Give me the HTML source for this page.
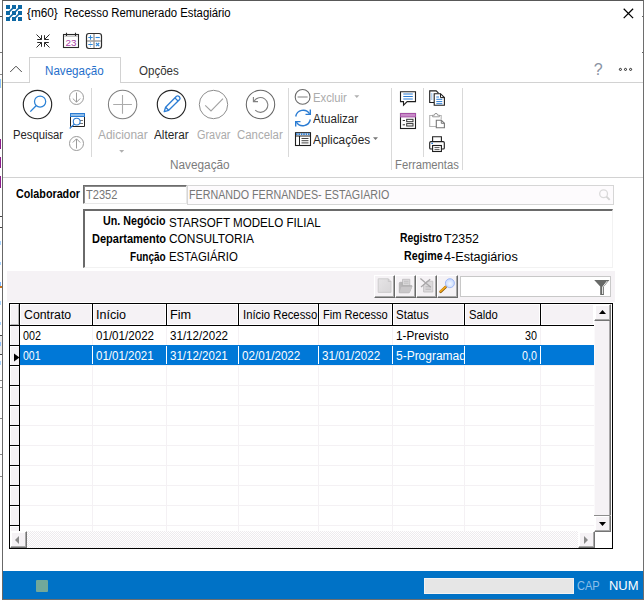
<!DOCTYPE html>
<html lang="pt-BR">
<head>
<meta charset="utf-8">
<title>{m60} Recesso Remunerado Estagiário</title>
<style>
*{box-sizing:border-box;margin:0;padding:0}
html,body{width:644px;height:600px;overflow:hidden;background:#fff}
body{font-family:"Liberation Sans",sans-serif;font-size:12px;color:#262626;position:relative}
.a{position:absolute}
.t{position:absolute;white-space:pre;line-height:14px;height:14px;transform-origin:0 0}
.sep{position:absolute;width:1px;background:#d9d9d9}
svg{position:absolute;overflow:visible}
.sbtn{position:absolute;width:17px;height:17px;background:#f5f2f5;border:1px solid;border-color:#fff #747474 #747474 #fff;box-shadow:inset -1px -1px 0 #a9a9a9,inset 1px 1px 0 #fff}
.tb{position:absolute;top:275px;width:21px;height:23px;background:#f5f2f5;border:1px solid;border-color:#fff #6a6a6a #6a6a6a #fff;box-shadow:inset -1px -1px 0 #a8a8a8}
</style>
</head>
<body>
<!-- window frame -->
<div class="a" style="left:2px;top:0;width:642px;height:600px;border:1px solid #6e6e6e;border-top-color:#585858;border-left-color:#686868"></div>
<!-- slivers of the window behind, visible left of the frame -->
<div class="a" style="left:0;top:16px;width:2px;height:1px;background:#555"></div>
<div class="a" style="left:0;top:52px;width:2px;height:1px;background:#777"></div>
<div class="a" style="left:0;top:74px;width:2px;height:1px;background:#888"></div>
<div class="a" style="left:0;top:79px;width:1px;height:9px;background:#8cc0ff"></div>
<div class="a" style="left:1px;top:79px;width:1px;height:9px;background:#ffffd8"></div>
<div class="a" style="left:0;top:139px;width:1px;height:10px;background:#8b1a8b"></div>
<div class="a" style="left:0;top:157px;width:1px;height:11px;background:#8b1a8b"></div>
<div class="a" style="left:0;top:176px;width:1px;height:12px;background:#8b1a8b"></div>
<div class="a" style="left:0;top:216px;width:2px;height:1px;background:#444"></div>
<div class="a" style="left:0;top:227px;width:2px;height:1px;background:#444"></div>
<div class="a" style="left:0;top:241px;width:1px;height:4px;background:#a6d4ff"></div>
<div class="a" style="left:0;top:262px;width:1px;height:3px;background:#a6d4ff"></div>
<div class="a" style="left:0;top:282px;width:1px;height:4px;background:#7db8ff"></div>
<div class="a" style="left:0;top:286px;width:2px;height:2px;background:#c9761f"></div>
<div class="a" style="left:0;top:301px;width:1px;height:4px;background:#a6d4ff"></div>
<div class="a" style="left:0;top:322px;width:1px;height:3px;background:#a6d4ff"></div>
<div class="a" style="left:0;top:335px;width:2px;height:20px;background:#ececec;border-top:1px solid #444;border-bottom:1px solid #444"></div>
<div class="a" style="left:0;top:342px;width:1px;height:4px;background:#8cc0ff"></div>
<div class="a" style="left:0;top:361px;width:1px;height:4px;background:#a6d4ff"></div>
<div class="a" style="left:0;top:380px;width:2px;height:1px;background:#888"></div>
<div class="a" style="left:0;top:387px;width:2px;height:1px;background:#888"></div>
<div class="a" style="left:0;top:418px;width:2px;height:1px;background:#888"></div>
<div class="a" style="left:0;top:454px;width:2px;height:1px;background:#888"></div>
<div class="a" style="left:0;top:476px;width:2px;height:1px;background:#888"></div>

<div class="a" style="left:642px;top:16px;width:1px;height:1px;background:#666"></div>
<div class="a" style="left:642px;top:52px;width:1px;height:1px;background:#666"></div>
<!-- title bar close -->
<svg style="left:622.5px;top:7.5px" width="11" height="11" viewBox="0 0 11 11"><path d="M0.7 0.7L10.1 10.1M10.1 0.7L0.7 10.1" stroke="#000" stroke-width="1.25" fill="none"/></svg>
<svg style="left:0;top:0" width="644" height="60" viewBox="0 0 644 60" fill="none">
<!-- app icon -->
<g fill="#0d68a4">
<rect x="6" y="5" width="4" height="4"/><rect x="12" y="5" width="4" height="4"/><rect x="18" y="5" width="4" height="4"/>
<rect x="6" y="11" width="4" height="4"/><rect x="12" y="11" width="4" height="4"/><rect x="18" y="11" width="4" height="4"/>
<rect x="6" y="17" width="4" height="4"/><rect x="12" y="17" width="4" height="4"/><rect x="18" y="17" width="4" height="4"/>
</g>
<g stroke="#0d68a4" stroke-width="1.7">
<path d="M13 8L9 12M19 8L15 12M13 14L9 18M19 14L15 18"/>
</g>
<!-- collapse arrows -->
<g stroke="#2a2a2a" stroke-width="1">
<path d="M36.5 34.5L41.5 39.5M41.5 35.2V39.5H37.2"/>
<path d="M49.5 34.5L44.5 39.5M44.5 35.2V39.5H48.8"/>
<path d="M36.5 47.5L41.5 42.5M41.5 46.8V42.5H37.2"/>
<path d="M49.5 47.5L44.5 42.5M44.5 46.8V42.5H48.8"/>
</g>
<!-- calendar -->
<rect x="63.5" y="34.5" width="15" height="13" fill="#fff" stroke="#2a2a2a" stroke-width="1.1"/>
<path d="M64.2 36.2H77.8" stroke="#c6c6c6" stroke-width="1.6"/>
<path d="M66.5 32.8V36M75.5 32.8V36" stroke="#2a2a2a" stroke-width="1.1"/>
<text x="65.6" y="45.6" textLength="11" lengthAdjust="spacingAndGlyphs" font-family="Liberation Sans, sans-serif" font-size="9.6" fill="#a83fa8" stroke="none">23</text>
<!-- calculator -->
<rect x="86.5" y="33.5" width="15" height="15" rx="2.4" fill="#fff" stroke="#2f2f2f" stroke-width="1.2"/>
<path d="M94 34V48M87 41H101" stroke="#a0a0a0" stroke-width="1.5"/>
<g stroke="#2b86d9" stroke-width="1.1">
<path d="M88.3 37.5H92.7M90.5 35.3V39.7"/>
<path d="M95.6 37.5H99.8"/>
<path d="M88.3 44.5H92.7M90.5 42.4V43.2M90.5 45.8V46.6"/>
<path d="M96 43L99.2 46.2M99.2 43L96 46.2"/>
</g>
</svg>

<!-- TABS -->
<div class="a" style="left:3px;top:82px;width:640px;height:1px;background:#d2d2d2"></div>
<div class="a" style="left:29px;top:57px;width:92px;height:26px;background:#fff;border:1px solid #d2d2d2;border-bottom:0"></div>
<svg style="left:10px;top:65px" width="13" height="8" viewBox="0 0 13 8"><path d="M0.2 7L6 1.2L11.8 7" stroke="#4a4a4a" stroke-width="1" fill="none"/></svg>
<span class="t" style="left:593.8px;top:61px;font-size:16px;line-height:18px;height:18px;color:#8a93a3">?</span>
<svg style="left:0;top:0" width="644" height="100" viewBox="0 0 644 100"><g fill="none" stroke="#1c1c1c" stroke-width="0.95"><circle cx="620.4" cy="69.4" r="1.05"/><circle cx="625.5" cy="69.4" r="1.05"/><circle cx="630.6" cy="69.4" r="1.05"/></g></svg>

<!-- RIBBON -->
<div class="a" style="left:3px;top:177px;width:640px;height:1px;background:#d2d2d2"></div>
<div class="sep" style="left:91px;top:88px;height:69px"></div>
<div class="sep" style="left:288px;top:88px;height:69px"></div>
<div class="sep" style="left:391px;top:88px;height:82px"></div>
<div class="sep" style="left:423px;top:88px;height:69px"></div>
<div class="sep" style="left:462px;top:88px;height:82px"></div>
<svg style="left:0;top:0" width="644" height="600" viewBox="0 0 644 600" fill="none" stroke-linecap="butt">
<!-- Pesquisar -->
<circle cx="37.5" cy="104.5" r="14.2" stroke="#262626" stroke-width="1.15"/>
<circle cx="40.1" cy="101.6" r="5.6" stroke="#2b82d6" stroke-width="1.25"/>
<path d="M36.1 105.7L30.3 111.6" stroke="#2b82d6" stroke-width="1.35"/>
<!-- down arrow circle -->
<circle cx="76.5" cy="97.5" r="7" stroke="#9a9a9a" stroke-width="1"/>
<path d="M76.5 92.5V102M72.8 98.5L76.5 102.2L80.2 98.5" stroke="#9a9a9a" stroke-width="1"/>
<!-- search window -->
<path d="M70.5 116.5V126.5H84.5V116.5" stroke="#222" stroke-width="1"/>
<rect x="70.5" y="113.5" width="14" height="3" fill="#8fbde9" stroke="#2b7cd3" stroke-width="1"/>
<path d="M79 120.5H83M79 123.5H83" stroke="#777" stroke-width="1"/>
<circle cx="76.7" cy="121.6" r="3.4" fill="#fff" stroke="#2b7cd3" stroke-width="1.1"/>
<path d="M74.3 124.1L69.7 128.5" stroke="#2b7cd3" stroke-width="1.2"/>
<!-- up arrow circle -->
<circle cx="76.5" cy="143.5" r="7" stroke="#9a9a9a" stroke-width="1"/>
<path d="M76.5 148.5V139M72.8 142.5L76.5 138.8L80.2 142.5" stroke="#9a9a9a" stroke-width="1"/>
<!-- Adicionar -->
<circle cx="122.6" cy="104.5" r="14.2" stroke="#7e7e7e" stroke-width="1.05"/>
<path d="M113.2 104.5H131.9M122.5 95V113.7" stroke="#ababab" stroke-width="1.1"/>
<path d="M119.2 150L121.7 152.8L124.2 150Z" fill="#b0b0b0" stroke="none"/>
<!-- Alterar -->
<circle cx="171.5" cy="104.5" r="14.2" stroke="#262626" stroke-width="1.15"/>
<g stroke="#2b7cd3" stroke-width="1.3" stroke-linejoin="round">
<path d="M164.2 111.7L165.6 107.2L176.5 96.3Q177.8 95.3 179 96.5L179.5 97Q180.6 98.3 179.6 99.5L168.7 110.3Z"/>
<path d="M165.6 107.2L168.7 110.3M174.9 97.9L178 101"/>
</g>
<!-- Gravar -->
<circle cx="213.5" cy="104.5" r="14.2" stroke="#8e8e8e" stroke-width="1"/>
<path d="M205.2 105.3L211 110.9L223 98.6" stroke="#a2a2a2" stroke-width="1.1"/>
<!-- Cancelar -->
<circle cx="260.5" cy="104.5" r="14.2" stroke="#666" stroke-width="1.05"/>
<path d="M253.4 97V101.6H258" stroke="#808080" stroke-width="1.1"/>
<path d="M254 101.3A7.4 7.4 0 1 1 255.2 110.2" stroke="#808080" stroke-width="1.1"/>
<!-- Excluir -->
<circle cx="302.6" cy="96.9" r="7.4" stroke="#6a6a6a" stroke-width="1.1"/>
<path d="M297.6 97H307.6" stroke="#8a8a8a" stroke-width="1.1"/>
<path d="M354.3 95.3L356.8 98L359.3 95.3Z" fill="#b0b0b0" stroke="none"/>
<!-- Atualizar -->
<g stroke="#2b7cd3" stroke-width="1.4">
<path d="M295.7 116.5A7.6 7.6 0 0 1 309.6 113.8"/>
<path d="M310.3 119.5A7.6 7.6 0 0 1 296.4 122.2"/>
<path d="M310.3 109.6V114.4H305.5"/>
<path d="M295.7 126.4V121.6H300.5"/>
</g>
<!-- Aplicacoes -->
<rect x="295.5" y="132.7" width="15" height="12.8" stroke="#1e1e1e" stroke-width="1.1"/>
<path d="M296 134.2H310" stroke="#2b7cd3" stroke-width="1.8" stroke-dasharray="1.6 0.8"/>
<path d="M295.5 136H310.5M299.5 136V145.5" stroke="#1e1e1e" stroke-width="1"/>
<path d="M301.5 138.5H308.5M301.5 140.7H308.5M301.5 142.9H308.5" stroke="#444" stroke-width="1"/>
<path d="M373 137.3L375.5 140L378 137.3Z" fill="#777" stroke="none"/>
<!-- Comment -->
<path d="M400.5 91.8H415.5V101.6H407.2L403.5 105.2V101.6H400.5Z" stroke="#1e1e1e" stroke-width="1.1" stroke-linejoin="miter"/>
<path d="M403.3 94H412.8M403.3 96.5H412.8M403.3 99H412.8" stroke="#2b7cd3" stroke-width="1.2"/>
<!-- Form -->
<rect x="400.5" y="113.5" width="15" height="15" stroke="#1e1e1e" stroke-width="1.1"/>
<rect x="400.5" y="113.5" width="15" height="3.4" fill="#c88cc8" stroke="#a550a5" stroke-width="1"/>
<path d="M402.7 120.5H405M402.7 124.8H405" stroke="#333" stroke-width="1"/>
<rect x="406.7" y="119.3" width="6.3" height="2.4" stroke="#333" stroke-width="1"/>
<rect x="406.7" y="123.6" width="6.3" height="2.4" stroke="#333" stroke-width="1"/>
<!-- Copy -->
<path d="M434 102.5H429.7V90.9H436.2L438.5 93.2" stroke="#1e1e1e" stroke-width="1.1"/>
<path d="M431.8 93.5V100" stroke="#2b7cd3" stroke-width="1" stroke-dasharray="1 1"/>
<path d="M434.2 93.7H440.5L444.4 97.6V105.2H434.2Z" fill="#fff" stroke="#1e1e1e" stroke-width="1.1"/>
<path d="M440.5 93.7V97.6H444.4" stroke="#1e1e1e" stroke-width="1"/>
<path d="M436.3 97H439M436.3 99.3H442.3M436.3 101.6H442.3M436.3 103.7H442.3" stroke="#2b7cd3" stroke-width="1"/>
<!-- Paste (disabled) -->
<path d="M436 126.5H429.7V115.5H433M439 115.5H441.2V119.5" stroke="#b5b5b5" stroke-width="1.1"/>
<path d="M432.6 116.8V115.2H434.4Q434.6 113.3 436 113.3Q437.4 113.3 437.6 115.2H439.4V116.8Z" stroke="#9a9a9a" stroke-width="1"/>
<path d="M436.3 120.2H441.3L444.4 123.3V127.7H436.3Z" fill="#fff" stroke="#777" stroke-width="1.1"/>
<path d="M441.3 120.2V123.3H444.4" stroke="#777" stroke-width="1"/>
<!-- Print -->
<path d="M432.6 141.5V136.7H441.4V141.5" stroke="#1e1e1e" stroke-width="1.1"/>
<path d="M432.6 149H430.7Q429.7 149 429.7 148V142.8Q429.7 141.6 430.9 141.6H443.1Q444.3 141.6 444.3 142.8V148Q444.3 149 443.3 149H441.4" stroke="#1e1e1e" stroke-width="1.1"/>
<rect x="432.6" y="145.5" width="8.8" height="6" fill="#fff" stroke="#1e1e1e" stroke-width="1.1"/>
<path d="M434.5 147.6H439.5M434.5 149.6H439.5" stroke="#444" stroke-width="0.9"/>
<path d="M431.3 143.4H433" stroke="#2b7cd3" stroke-width="1.2"/>
</svg>

<!-- FORM -->
<div class="a" style="left:83px;top:185px;width:104px;height:19px;background:#fff;border:1px solid;border-color:#6d6d6d #e8e8e8 #e8e8e8 #6d6d6d;box-shadow:inset 1px 1px 0 #8a8a8a"></div>
<div class="a" style="left:187px;top:185px;width:427px;height:20px;background:#fdfbfd;border:1px solid #d6d6d6"></div>
<svg style="left:0;top:0" width="644" height="210" viewBox="0 0 644 210"><circle cx="603.6" cy="193.8" r="3.9" fill="none" stroke="#dadada" stroke-width="1.3"/><path d="M606.5 196.7L609.7 199.9" stroke="#d4d4d4" stroke-width="1.9"/></svg>
<div class="a" style="left:83px;top:209px;width:530px;height:59px;background:#fff;border:2px solid;border-color:#6a6a6a #f2f2f2 #f2f2f2 #6a6a6a;border-right-width:1px;border-bottom-width:1px"></div>

<!-- GRID TOOLBAR -->
<div class="a" style="left:7px;top:271px;width:608px;height:31px;background:#f5f2f5"></div>
<div class="tb" style="left:374px"></div>
<div class="tb" style="left:395px"></div>
<div class="tb" style="left:416px"></div>
<div class="tb" style="left:437px"></div>
<div class="a" style="left:460px;top:276px;width:151px;height:21px;background:#fff;border:1px solid #c8c8c8"></div>
<svg style="left:0;top:0" width="644" height="600" viewBox="0 0 644 600" fill="none">
<defs>
<radialGradient id="lens" cx="0.5" cy="0.55" r="0.6"><stop offset="0" stop-color="#f4f8ff"/><stop offset="0.7" stop-color="#cfdfff"/><stop offset="1" stop-color="#b3c8fb"/></radialGradient>
<linearGradient id="pg" x1="0" y1="0" x2="1" y2="1"><stop offset="0" stop-color="#e6e4e6"/><stop offset="1" stop-color="#d8d6d8"/></linearGradient>
</defs>
<!-- new page (disabled) -->
<path d="M378.2 278.8H388.3L391 281.5V292.4H378.2Z" fill="url(#pg)" stroke="#cbc9cb" stroke-width="0.9"/>
<path d="M388.3 278.8V281.5H391" stroke="#c4c2c4" stroke-width="0.8"/>
<!-- open folder (disabled) -->
<path d="M402.5 279.3H409.8V286H402.5Z" fill="#d9d7d9" stroke="#bcbabc" stroke-width="0.8"/>
<path d="M404 281.3H408.5M404 283.2H408.5" stroke="#bdbbbd" stroke-width="0.8"/>
<path d="M399.3 283.2Q399.3 282.3 400.2 282.3H402.3V285.5H411.6Q412.3 285.6 412 286.5L409.6 292.2Q409.3 292.8 408.6 292.8H399.3Z" fill="#b9b7b9" stroke="#aeacae" stroke-width="0.7"/>
<path d="M401.3 287H412L409.4 292.6H399.4Z" fill="#c9c7c9"/>
<!-- delete (disabled) -->
<path d="M423.6 284.5L427 281.2H432.8V292H423.6Z" fill="#dbd9db" stroke="#c3c1c3" stroke-width="0.9"/>
<path d="M425.5 286.8H431M425.5 289.2H431" stroke="#b8b6b8" stroke-width="1"/>
<path d="M420.4 278.4L430.8 287.2M430.2 279.2L421 287" stroke="#a9a7a9" stroke-width="1.3"/>
<!-- search -->
<path d="M445.6 287L440.6 291.8" stroke="#8a5a08" stroke-width="2.6" stroke-linecap="round"/>
<path d="M445.4 286.8L440.5 291.4" stroke="#f5a81c" stroke-width="1.7" stroke-linecap="round"/>
<circle cx="449.9" cy="283.2" r="4.5" fill="url(#lens)" stroke="#a3baf6" stroke-width="1"/>
<!-- funnel -->
<path d="M594.2 280H609.4L603.9 286.6V294.9H600.2V286.6Z" fill="#686a68"/>
<path d="M607.3 281L602.6 287V294" stroke="#fff" stroke-width="0.9"/>
</svg>


<!-- GRID -->
<div class="a" style="left:9px;top:303px;width:604px;height:246px;background:#fff;border:1px solid #000"></div>
<div class="a" style="left:10px;top:304px;width:584px;height:21px;background:#f5f2f5"></div>
<div class="a" style="left:10px;top:325px;width:584px;height:1px;background:#000"></div>
<div class="a" style="left:10px;top:304px;width:9px;height:21px;border:1px solid;border-color:#fff #b4b4b4 #b4b4b4 #fff"></div>
<div class="a" style="left:20px;top:304px;width:72px;height:21px;border:1px solid #fff"></div>
<div class="a" style="left:93px;top:304px;width:73px;height:21px;border:1px solid #fff"></div>
<div class="a" style="left:167px;top:304px;width:71px;height:21px;border:1px solid #fff"></div>
<div class="a" style="left:239px;top:304px;width:79px;height:21px;border:1px solid #fff"></div>
<div class="a" style="left:319px;top:304px;width:73px;height:21px;border:1px solid #fff"></div>
<div class="a" style="left:393px;top:304px;width:71px;height:21px;border:1px solid #fff"></div>
<div class="a" style="left:465px;top:304px;width:75px;height:21px;border:1px solid #fff"></div>
<div class="a" style="left:541px;top:304px;width:53px;height:21px;border:1px solid #fff"></div>
<div class="a" style="left:19px;top:304px;width:1px;height:21px;background:#000"></div>
<div class="a" style="left:92px;top:304px;width:1px;height:21px;background:#000"></div>
<div class="a" style="left:166px;top:304px;width:1px;height:21px;background:#000"></div>
<div class="a" style="left:238px;top:304px;width:1px;height:21px;background:#000"></div>
<div class="a" style="left:318px;top:304px;width:1px;height:21px;background:#000"></div>
<div class="a" style="left:392px;top:304px;width:1px;height:21px;background:#000"></div>
<div class="a" style="left:464px;top:304px;width:1px;height:21px;background:#000"></div>
<div class="a" style="left:540px;top:304px;width:1px;height:21px;background:#000"></div>
<div class="a" style="left:10px;top:326px;width:9px;height:205px;background:#f5f2f5;border-left:1px solid #fff"></div>
<div class="a" style="left:19px;top:326px;width:1px;height:205px;background:#000"></div>
<div class="a" style="left:10px;top:345px;width:9px;height:1px;background:#000"></div>
<div class="a" style="left:11px;top:346px;width:8px;height:1px;background:#fff"></div>
<div class="a" style="left:20px;top:345px;width:574px;height:1px;background:#f4f1f4"></div>
<div class="a" style="left:10px;top:365px;width:9px;height:1px;background:#000"></div>
<div class="a" style="left:11px;top:366px;width:8px;height:1px;background:#fff"></div>
<div class="a" style="left:20px;top:365px;width:574px;height:1px;background:#f4f1f4"></div>
<div class="a" style="left:10px;top:385px;width:9px;height:1px;background:#000"></div>
<div class="a" style="left:11px;top:386px;width:8px;height:1px;background:#fff"></div>
<div class="a" style="left:20px;top:385px;width:574px;height:1px;background:#f4f1f4"></div>
<div class="a" style="left:10px;top:405px;width:9px;height:1px;background:#000"></div>
<div class="a" style="left:11px;top:406px;width:8px;height:1px;background:#fff"></div>
<div class="a" style="left:20px;top:405px;width:574px;height:1px;background:#f4f1f4"></div>
<div class="a" style="left:10px;top:425px;width:9px;height:1px;background:#000"></div>
<div class="a" style="left:11px;top:426px;width:8px;height:1px;background:#fff"></div>
<div class="a" style="left:20px;top:425px;width:574px;height:1px;background:#f4f1f4"></div>
<div class="a" style="left:10px;top:445px;width:9px;height:1px;background:#000"></div>
<div class="a" style="left:11px;top:446px;width:8px;height:1px;background:#fff"></div>
<div class="a" style="left:20px;top:445px;width:574px;height:1px;background:#f4f1f4"></div>
<div class="a" style="left:10px;top:465px;width:9px;height:1px;background:#000"></div>
<div class="a" style="left:11px;top:466px;width:8px;height:1px;background:#fff"></div>
<div class="a" style="left:20px;top:465px;width:574px;height:1px;background:#f4f1f4"></div>
<div class="a" style="left:10px;top:485px;width:9px;height:1px;background:#000"></div>
<div class="a" style="left:11px;top:486px;width:8px;height:1px;background:#fff"></div>
<div class="a" style="left:20px;top:485px;width:574px;height:1px;background:#f4f1f4"></div>
<div class="a" style="left:10px;top:505px;width:9px;height:1px;background:#000"></div>
<div class="a" style="left:11px;top:506px;width:8px;height:1px;background:#fff"></div>
<div class="a" style="left:20px;top:505px;width:574px;height:1px;background:#f4f1f4"></div>
<div class="a" style="left:10px;top:525px;width:9px;height:1px;background:#000"></div>
<div class="a" style="left:11px;top:526px;width:8px;height:1px;background:#fff"></div>
<div class="a" style="left:20px;top:525px;width:574px;height:1px;background:#f4f1f4"></div>
<div class="a" style="left:92px;top:327px;width:1px;height:204px;background:#f4f1f4"></div>
<div class="a" style="left:166px;top:327px;width:1px;height:204px;background:#f4f1f4"></div>
<div class="a" style="left:238px;top:327px;width:1px;height:204px;background:#f4f1f4"></div>
<div class="a" style="left:318px;top:327px;width:1px;height:204px;background:#f4f1f4"></div>
<div class="a" style="left:392px;top:327px;width:1px;height:204px;background:#f4f1f4"></div>
<div class="a" style="left:464px;top:327px;width:1px;height:204px;background:#f4f1f4"></div>
<div class="a" style="left:540px;top:327px;width:1px;height:204px;background:#f4f1f4"></div>
<div class="a" style="left:20px;top:345px;width:574px;height:20px;background:#0078d7"></div>
<div class="a" style="left:92px;top:346px;width:1px;height:18px;background:#fff"></div>
<div class="a" style="left:166px;top:346px;width:1px;height:18px;background:#fff"></div>
<div class="a" style="left:238px;top:346px;width:1px;height:18px;background:#fff"></div>
<div class="a" style="left:318px;top:346px;width:1px;height:18px;background:#fff"></div>
<div class="a" style="left:392px;top:346px;width:1px;height:18px;background:#fff"></div>
<div class="a" style="left:464px;top:346px;width:1px;height:18px;background:#fff"></div>
<div class="a" style="left:540px;top:346px;width:1px;height:18px;background:#fff"></div>
<svg style="left:14px;top:353px" width="6" height="9" viewBox="0 0 6 9"><path d="M0 0.5L5.5 4.5L0 8.5Z" fill="#000"/></svg>
<div class="a" style="left:594px;top:304px;width:17px;height:228px;background:#f5f2f5;border-left:1px solid #fbfafb"></div>
<div class="a" style="left:609px;top:304px;width:1px;height:228px;background:#a9a7a9"></div>
<div class="a" style="left:610px;top:304px;width:1px;height:228px;background:#6e6e6e"></div>
<div class="sbtn" style="left:594px;top:304px"></div>
<svg style="left:599px;top:310px" width="7" height="4" viewBox="0 0 7 4"><path d="M0 4L3.5 0L7 4Z" fill="#000"/></svg>
<div class="sbtn" style="left:594px;top:515px"></div>
<div class="a" style="left:594px;top:515px;width:16px;height:1px;background:#8c8c8c"></div>
<svg style="left:599px;top:522px" width="7" height="4" viewBox="0 0 7 4"><path d="M0 0L3.5 4L7 0Z" fill="#000"/></svg>
<div class="a" style="left:10px;top:531px;width:585px;height:17px;background:repeating-conic-gradient(#fff 0 25%,#eeebee 0 50%) 0 0/2px 2px"></div>
<div class="sbtn" style="left:10px;top:531px"></div>
<svg style="left:15px;top:535.5px" width="4" height="8" viewBox="0 0 4 8"><path d="M4 0L0 4L4 8Z" fill="#8a8a8a"/></svg>
<div class="sbtn" style="left:578px;top:531px"></div>
<svg style="left:584px;top:535.5px" width="4" height="8" viewBox="0 0 4 8"><path d="M0 0L4 4L0 8Z" fill="#8a8a8a"/></svg>
<div class="a" style="left:595px;top:532px;width:17px;height:16px;background:#fff"></div>
<!-- STATUS BAR -->
<div class="a" style="left:3px;top:571px;width:640px;height:28px;background:#0072c6"></div>
<div class="a" style="left:36px;top:580px;width:12px;height:12px;background:#72a89a;border-radius:1px"></div>
<div class="a" style="left:424px;top:578px;width:150px;height:16px;background:#e6e6e6;border:1px solid #f2f2f2"></div>
<!-- TEXT -->
<span class="t" style="left:26.85px;top:6px;color:#000;transform:scaleX(0.9814)">{m60}</span>
<span class="t" style="left:63.75px;top:6px;color:#000;transform:scaleX(0.9466)">Recesso Remunerado Estagiário</span>
<span class="t" style="left:44.73px;top:64px;color:#1f6fcb;transform:scaleX(0.9671)">Navegação</span>
<span class="t" style="left:139.20px;top:64px;color:#333;transform:scaleX(0.9615)">Opções</span>
<span class="t" style="left:12.76px;top:128px;color:#262626;transform:scaleX(0.9381)">Pesquisar</span>
<span class="t" style="left:98.00px;top:128px;color:#ababab;transform:scaleX(0.9925)">Adicionar</span>
<span class="t" style="left:154.30px;top:128px;color:#262626;transform:scaleX(0.9822)">Alterar</span>
<span class="t" style="left:197.33px;top:128px;color:#ababab;transform:scaleX(0.9087)">Gravar</span>
<span class="t" style="left:237.20px;top:128px;color:#ababab;transform:scaleX(0.9524)">Cancelar</span>
<span class="t" style="left:312.66px;top:91px;color:#ababab;transform:scaleX(0.9381)">Excluir</span>
<span class="t" style="left:313.30px;top:112px;color:#262626;transform:scaleX(0.9677)">Atualizar</span>
<span class="t" style="left:313.30px;top:133px;color:#262626;transform:scaleX(0.9839)">Aplicações</span>
<span class="t" style="left:169.52px;top:158px;color:#7c7c7c;transform:scaleX(0.9831)">Navegação</span>
<span class="t" style="left:394.81px;top:158px;color:#7c7c7c;transform:scaleX(0.9388)">Ferramentas</span>
<span class="t" style="left:16.25px;top:187px;color:#000;font-weight:bold;transform:scaleX(0.8963)">Colaborador</span>
<span class="t" style="left:86.27px;top:188px;color:#767676;transform:scaleX(0.9208)">T2352</span>
<span class="t" style="left:189.31px;top:188px;color:#767676;transform:scaleX(0.8924)">FERNANDO FERNANDES- ESTAGIARIO</span>
<span class="t" style="left:103.33px;top:214px;color:#000;font-weight:bold;transform:scaleX(0.8916)">Un. Negócio</span>
<span class="t" style="left:91.61px;top:232px;color:#000;font-weight:bold;transform:scaleX(0.9182)">Departamento</span>
<span class="t" style="left:129.97px;top:250px;color:#000;font-weight:bold;transform:scaleX(0.8361)">Função</span>
<span class="t" style="left:168.70px;top:216px;color:#000;transform:scaleX(0.9668)">STARSOFT MODELO FILIAL</span>
<span class="t" style="left:168.68px;top:232px;color:#000;transform:scaleX(0.9920)">CONSULTORIA</span>
<span class="t" style="left:169.15px;top:250px;color:#000;transform:scaleX(0.9496)">ESTAGIÁRIO</span>
<span class="t" style="left:400.35px;top:231px;color:#000;font-weight:bold;transform:scaleX(0.8653)">Registro</span>
<span class="t" style="left:403.83px;top:249px;color:#000;font-weight:bold;transform:scaleX(0.8899)">Regime</span>
<span class="t" style="left:443.74px;top:232px;color:#000;transform:scaleX(1.0264)">T2352</span>
<span class="t" style="left:443.74px;top:250px;color:#000;transform:scaleX(1.0523)">4-Estagiários</span>
<span class="t" style="left:23.96px;top:308px;color:#000;transform:scaleX(1.0251)">Contrato</span>
<span class="t" style="left:96.03px;top:308px;color:#000;transform:scaleX(1.0444)">Início</span>
<span class="t" style="left:169.94px;top:308px;color:#000;transform:scaleX(1.0575)">Fim</span>
<span class="t" style="left:242.94px;top:308px;color:#000;transform:scaleX(0.9439)">Início Recesso</span>
<span class="t" style="left:322.78px;top:308px;color:#000;transform:scaleX(0.9241)">Fim Recesso</span>
<span class="t" style="left:396.30px;top:308px;color:#000;transform:scaleX(0.9606)">Status</span>
<span class="t" style="left:468.92px;top:308px;color:#000;transform:scaleX(0.9350)">Saldo</span>
<span class="t" style="left:23.05px;top:329px;color:#000;transform:scaleX(0.8954)">002</span>
<span class="t" style="left:95.92px;top:329px;color:#000;transform:scaleX(0.9661)">01/01/2022</span>
<span class="t" style="left:169.82px;top:329px;color:#000;transform:scaleX(0.9661)">31/12/2022</span>
<span class="t" style="left:396.04px;top:329px;color:#000;transform:scaleX(0.9786)">1-Previsto</span>
<span class="t" style="left:525.25px;top:329px;color:#000;transform:scaleX(0.8970)">30</span>
<span class="t" style="left:23.06px;top:349px;color:#fff;transform:scaleX(0.8742)">001</span>
<span class="t" style="left:95.92px;top:349px;color:#fff;transform:scaleX(0.9593)">01/01/2021</span>
<span class="t" style="left:169.82px;top:349px;color:#fff;transform:scaleX(0.9610)">31/12/2021</span>
<span class="t" style="left:242.21px;top:349px;color:#fff;transform:scaleX(0.9712)">02/01/2022</span>
<span class="t" style="left:322.12px;top:349px;color:#fff;transform:scaleX(0.9678)">31/01/2022</span>
<div class="a" style="left:395.9px;top:347px;width:68.1px;height:18px;overflow:hidden"><span class="t" style="left:0.50px;top:2px;color:#fff;transform:scaleX(0.9980)">5-Programado</span></div>
<span class="t" style="left:522.36px;top:349px;color:#fff;transform:scaleX(0.8889)">0,0</span>
<span class="t" style="left:577.03px;top:579px;color:#8cbfe8;transform:scaleX(0.9198)">CAP</span>
<span class="t" style="left:608.52px;top:579px;color:#fff;transform:scaleX(1.0798)">NUM</span>
</body>
</html>
